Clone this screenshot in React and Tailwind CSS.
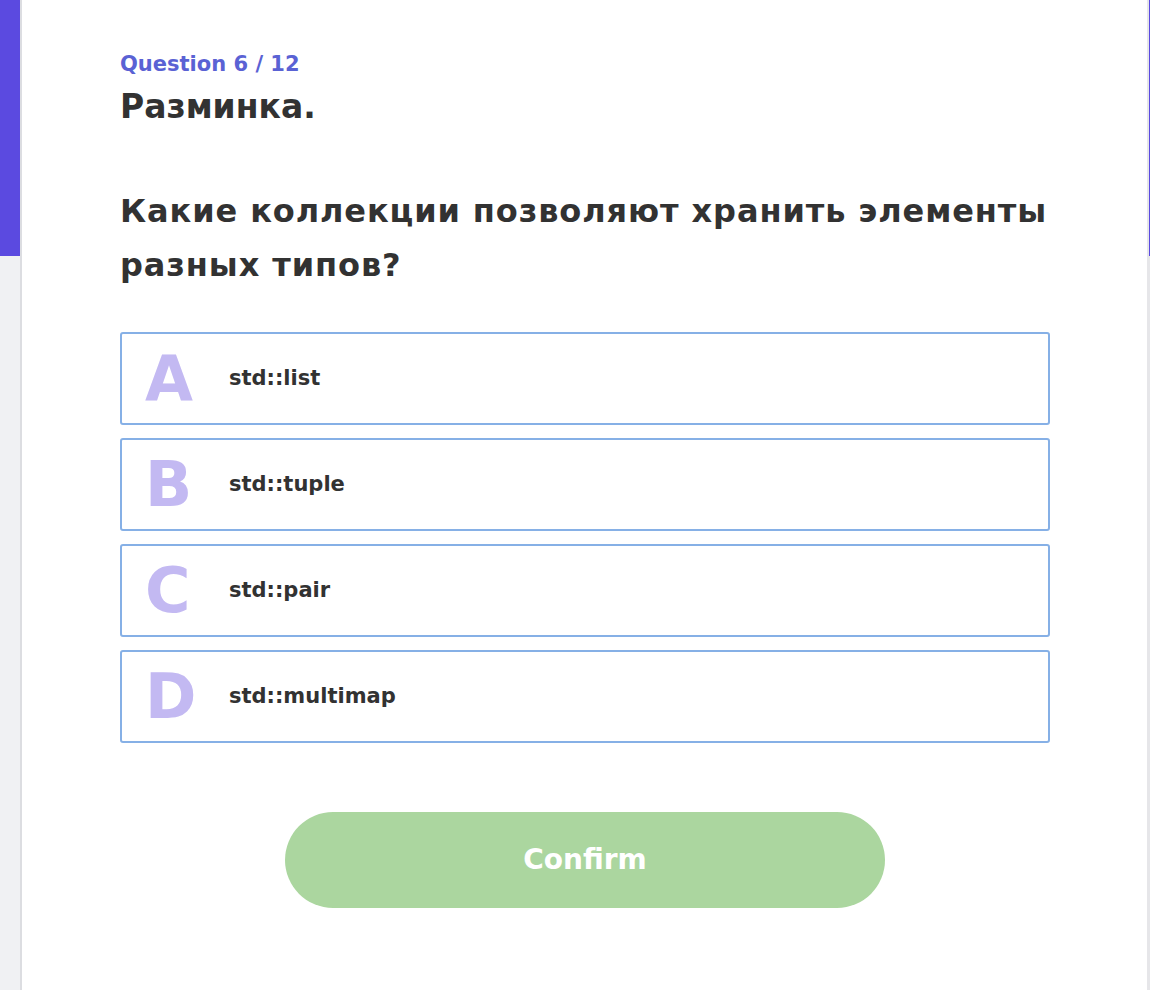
import React, { useState } from 'react';

const options = [
  { letter: 'A', text: 'std::list' },
  { letter: 'B', text: 'std::tuple' },
  { letter: 'C', text: 'std::pair' },
  { letter: 'D', text: 'std::multimap' },
];

const font = { fontFamily: '"DejaVu Sans", "Noto Sans", sans-serif' };

const App = () => {
  const [selected, setSelected] = useState(null);

  return (
    <div className="flex min-h-[990px] bg-white" style={font}>
      {/* left rail */}
      <div className="w-[20px] shrink-0 bg-[#f0f1f3]">
        <div className="h-[256px] bg-[#5b4ae0]" />
      </div>

      {/* quiz card */}
      <div className="flex-1 border-l-2 border-[#dcdde1] bg-white pl-[98px] pt-[50px]">
        <div className="w-[930px]">
          <div className="text-[21px] leading-[28px] font-semibold text-[#5a62d4]">Question 6 / 12</div>
          <h1 className="mt-[9px] text-[33px] leading-[40px] font-bold text-[#323232]">Разминка.</h1>
          <h2 className="mt-[57px] text-[32px] leading-[54px] font-bold tracking-[0.9px] text-[#323232]">
            Какие коллекции позволяют хранить элементы разных типов?
          </h2>

          <div className="mt-[40px] flex flex-col gap-[13px]">
            {options.map((o) => (
              <button
                key={o.letter}
                onClick={() => setSelected(o.letter)}
                className={`flex h-[93px] items-center rounded-[3px] border-2 bg-white text-left ${
                  selected === o.letter ? 'border-[#5b4ae0]' : 'border-[#86b0e6]'
                }`}
              >
                <span className="w-[107px] pl-[23px] text-[62px] leading-none font-bold text-[#c3b9f2]">{o.letter}</span>
                <span className="text-[21px] font-semibold text-[#323232]">{o.text}</span>
              </button>
            ))}
          </div>

          <div className="mt-[69px] flex justify-center">
            <button className="h-[96px] w-[600px] rounded-full bg-[#abd69f] text-[28px] font-bold text-white">
              Confirm
            </button>
          </div>
        </div>
      </div>

      {/* right edge */}
      <div className="flex w-[3px] shrink-0 justify-end bg-[#e6e6e9]">
        <div className="h-[256px] w-[1px] bg-[#5b4ae0]" />
      </div>
    </div>
  );
};

export default App;
